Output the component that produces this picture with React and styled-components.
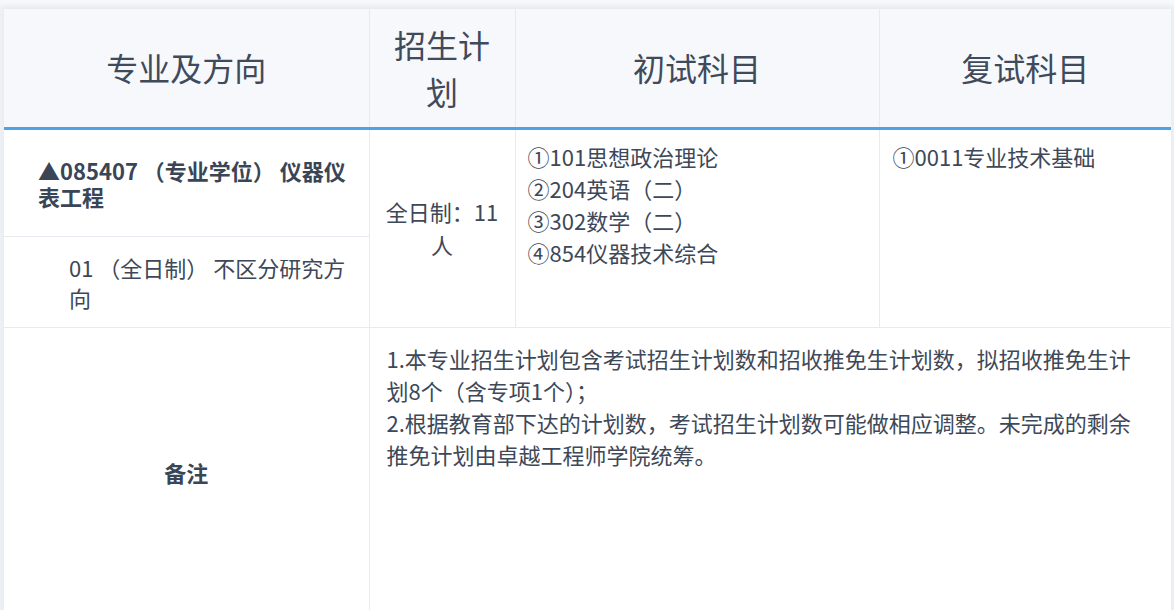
import React from 'react';
import styled, { createGlobalStyle } from 'styled-components';

const GlobalStyle = createGlobalStyle`
  html, body {
    margin: 0;
    padding: 0;
    background: #f3f5f8;
    font-family: "Noto Sans CJK SC", "Noto Sans", sans-serif;
    color: #3d4858;
  }
`;

const Page = styled.div`
  padding: 9px 3px 0 4px;
  background: linear-gradient(#f8f9fb, #eef1f4 9px, #eef2f6 9px);
  overflow: hidden;
  height: 610px;
  box-sizing: border-box;
`;

const Table = styled.table`
  width: 1167px;
  border-collapse: collapse;
  table-layout: fixed;
  background: #fff;
  box-shadow: 0 -2px 6px rgba(0, 0, 0, 0.04);
`;

const HeadCell = styled.th`
  height: 119px;
  padding: 0 18px;
  background: #f6f8fc;
  font-size: 32px;
  font-weight: 400;
  line-height: 47px;
  color: #3f4a5b;
  text-align: center;
  border-left: 1px solid #e7ebf0;
  border-bottom: 3px solid #4ba4e6;
  box-sizing: border-box;
  &:first-child { border-left: none; }
`;

const Cell = styled.td`
  border-left: 1px solid #e7ebf0;
  border-bottom: 1px solid #e7ebf0;
  font-size: 22px;
  line-height: ${(p) => p.$lh || 32}px;
  font-weight: ${(p) => (p.$bold ? 700 : 400)};
  text-align: ${(p) => p.$align || 'left'};
  vertical-align: ${(p) => p.$valign || 'middle'};
  padding: ${(p) => p.$pad || '0'};
  color: ${(p) => (p.$bold ? '#3a4555' : '#3d4858')};
  box-sizing: border-box;
  word-break: break-all;
  &:first-child { border-left: none; }
`;

const Row = styled.tr`
  height: ${(p) => p.$h}px;
`;

const Line = styled.div``;

export default function App() {
  return (
    <>
      <GlobalStyle />
      <Page>
        <Table>
          <colgroup>
            <col style={{ width: 365 }} />
            <col style={{ width: 146 }} />
            <col style={{ width: 364 }} />
            <col style={{ width: 292 }} />
          </colgroup>
          <thead>
            <tr>
              <HeadCell>专业及方向</HeadCell>
              <HeadCell>招生计划</HeadCell>
              <HeadCell>初试科目</HeadCell>
              <HeadCell>复试科目</HeadCell>
            </tr>
          </thead>
          <tbody>
            <Row $h={108}>
              <Cell $bold $lh={26} $pad="0 12px 0 34px">
                ▲085407 （专业学位） 仪器仪表工程
              </Cell>
              <Cell rowSpan={2} $align="center" $lh={33} $pad="0 16px">
                全日制：11 人
              </Cell>
              <Cell rowSpan={2} $valign="top" $pad="10px 12px 0 12px">
                <Line>①101思想政治理论</Line>
                <Line>②204英语（二）</Line>
                <Line>③302数学（二）</Line>
                <Line>④854仪器技术综合</Line>
              </Cell>
              <Cell rowSpan={2} $valign="top" $pad="10px 12px 0 13px">
                ①0011专业技术基础
              </Cell>
            </Row>
            <Row $h={91}>
              <Cell $lh={30} $pad="0 12px 0 65px">
                01 （全日制） 不区分研究方向
              </Cell>
            </Row>
            <Row $h={290}>
              <Cell $bold $align="center">备注</Cell>
              <Cell colSpan={3} $valign="top" $pad="14px 28px 0 17px">
                <Line>1.本专业招生计划包含考试招生计划数和招收推免生计划数，拟招收推免生计划8个（含专项1个）；</Line>
                <Line>2.根据教育部下达的计划数，考试招生计划数可能做相应调整。未完成的剩余推免计划由卓越工程师学院统筹。</Line>
              </Cell>
            </Row>
          </tbody>
        </Table>
      </Page>
    </>
  );
}
